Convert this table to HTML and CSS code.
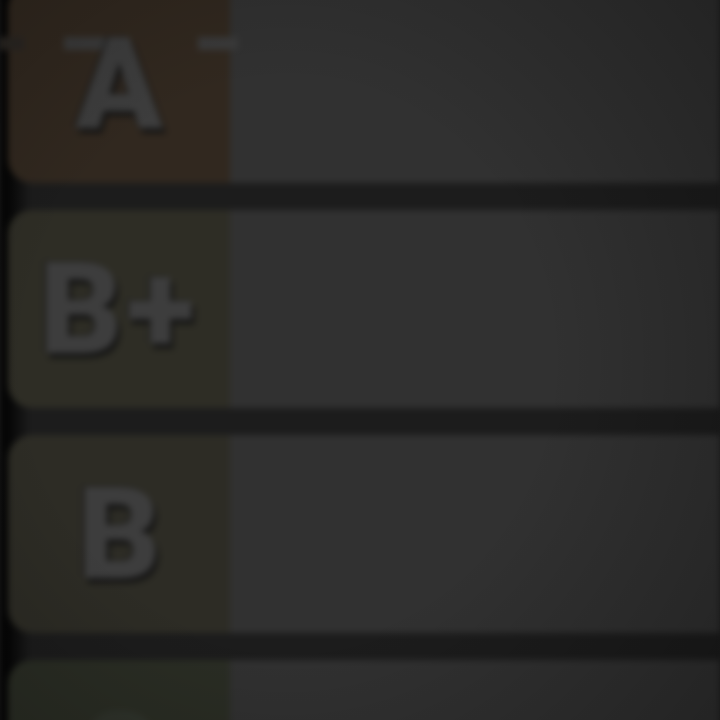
FILE: index.html
```html
<!DOCTYPE html>
<html>
<head>
<meta charset="utf-8">
<link rel="stylesheet" href="styles.css">
</head>
<body>
<div class="stage">
  <div class="list">
    <div class="tier">
      <div class="label label-a">
        <span class="strip strip-1"></span>
        <span class="strip strip-2"></span>
        <span class="strip strip-3"></span>
        <span class="letter">A</span>
      </div>
      <div class="content"></div>
    </div>
    <div class="tier">
      <div class="label label-bp"><span class="letter letter-wide">B+</span></div>
      <div class="content"></div>
    </div>
    <div class="tier">
      <div class="label label-b"><span class="letter">B</span></div>
      <div class="content"></div>
    </div>
    <div class="tier">
      <div class="label label-c"><span class="letter letter-faint">C</span></div>
      <div class="content"></div>
    </div>
  </div>
  <div class="vignette"></div>
</div>
</body>
</html>
```

FILE: styles.css
```css
html, body {
  margin: 0;
  padding: 0;
  width: 720px;
  height: 720px;
  overflow: hidden;
  background: #0b0b0b;
}

.stage {
  position: relative;
  width: 720px;
  height: 720px;
  overflow: hidden;
  background: #1c1c1c;
}

.list {
  display: flex;
  flex-direction: column;
  gap: 27px;
  margin-top: -15px;
  padding-left: 8px;
  filter: blur(3px);
  background: linear-gradient(to right, #050505 0, #050505 8px, #1c1c1c 30px);
}

.tier {
  display: flex;
  height: 198px;
}

.label {
  position: relative;
  width: 222px;
  flex: none;
  border-radius: 24px 0 0 24px;
  display: flex;
  align-items: center;
  justify-content: center;
}

.label-a { background: #31281f; }
.label-bp { background: #2e2d25; }
.label-b { background: #2d2c25; }
.label-c { background: #2a2d24; }

.content {
  flex: 1;
  background: #313131;
}

.letter {
  position: relative;
  font-family: Roboto, "Liberation Sans", sans-serif;
  font-weight: 900;
  font-size: 128px;
  line-height: 1;
  color: #3d3d3d;
  text-shadow: 3px 5px 3px #141414, -2px -1px 2px #1e1e1e;
}

.letter-wide {
  letter-spacing: 4px;
}

.letter-faint {
  color: #2f332b;
  text-shadow: none;
}

.strip {
  position: absolute;
  top: 52px;
  height: 13px;
  background: #3a3a3a;
}

.strip-1 { left: -8px; width: 24px; background: #2a2622; }
.strip-2 { left: 56px; width: 42px; }
.strip-3 { left: 190px; width: 40px; }

.vignette {
  position: absolute;
  inset: 0;
  pointer-events: none;
  background:
    radial-gradient(ellipse 80% 85% at 40% 50%, rgba(0,0,0,0) 45%, rgba(0,0,0,0.3) 100%);
}
```
